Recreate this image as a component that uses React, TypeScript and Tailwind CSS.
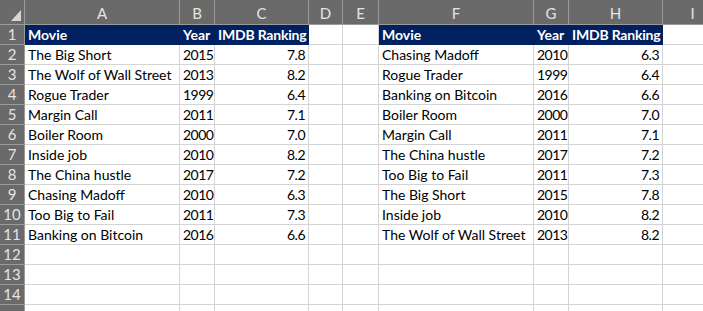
import React from "react";

const left: [string, string, string][] = [
  ["The Big Short", "2015", "7.8"],
  ["The Wolf of Wall Street", "2013", "8.2"],
  ["Rogue Trader", "1999", "6.4"],
  ["Margin Call", "2011", "7.1"],
  ["Boiler Room", "2000", "7.0"],
  ["Inside job", "2010", "8.2"],
  ["The China hustle", "2017", "7.2"],
  ["Chasing Madoff", "2010", "6.3"],
  ["Too Big to Fail", "2011", "7.3"],
  ["Banking on Bitcoin", "2016", "6.6"],
];

const right: [string, string, string][] = [
  ["Chasing Madoff", "2010", "6.3"],
  ["Rogue Trader", "1999", "6.4"],
  ["Banking on Bitcoin", "2016", "6.6"],
  ["Boiler Room", "2000", "7.0"],
  ["Margin Call", "2011", "7.1"],
  ["The China hustle", "2017", "7.2"],
  ["Too Big to Fail", "2011", "7.3"],
  ["The Big Short", "2015", "7.8"],
  ["Inside job", "2010", "8.2"],
  ["The Wolf of Wall Street", "2013", "8.2"],
];

const cols = ["A", "B", "C", "D", "E", "F", "G", "H", "I"];

const cell =
  "h-[20px] border-r border-b border-[#d4d4d4] px-[3px] leading-[19px] whitespace-nowrap overflow-hidden text-black text-[14px]";
const num = cell + " text-right tracking-[-0.5px]";
const head =
  "h-[20px] border-r border-b border-[#002060] bg-[#002060] px-[3px] leading-[19px] whitespace-nowrap overflow-hidden text-white font-bold text-[14px]";
const rowHdr =
  "h-[20px] border-r border-b border-[#9b9b9b] bg-[#6a6a6a] text-[#e4e4e4] text-center leading-[19px] text-[15px]";

export default function App() {
  const rows: React.ReactNode[] = [];
  for (let r = 1; r <= 15; r++) {
    const L = r >= 2 && r <= 11 ? left[r - 2] : null;
    const R = r >= 2 && r <= 11 ? right[r - 2] : null;
    rows.push(<div key={`h${r}`} className={rowHdr}>{r <= 14 ? r : ""}</div>);
    if (r === 1) {
      rows.push(<div key="a1" className={head}>Movie</div>);
      rows.push(<div key="b1" className={head}>Year</div>);
      rows.push(<div key="c1" className={head + " text-right tracking-[-0.2px]"}>IMDB Ranking</div>);
      rows.push(<div key="d1" className={cell}></div>);
      rows.push(<div key="e1" className={cell}></div>);
      rows.push(<div key="f1" className={head}>Movie</div>);
      rows.push(<div key="g1" className={head}>Year</div>);
      rows.push(<div key="h1" className={head + " text-right tracking-[-0.2px]"}>IMDB Ranking</div>);
      rows.push(<div key="i1" className={cell}></div>);
    } else {
      rows.push(<div key={`a${r}`} className={cell}>{L ? L[0] : ""}</div>);
      rows.push(<div key={`b${r}`} className={num}>{L ? L[1] : ""}</div>);
      rows.push(<div key={`c${r}`} className={num}>{L ? L[2] : ""}</div>);
      rows.push(<div key={`d${r}`} className={cell}></div>);
      rows.push(<div key={`e${r}`} className={cell}></div>);
      rows.push(<div key={`f${r}`} className={cell}>{R ? R[0] : ""}</div>);
      rows.push(<div key={`g${r}`} className={num}>{R ? R[1] : ""}</div>);
      rows.push(<div key={`h${r}`} className={num}>{R ? R[2] : ""}</div>);
      rows.push(<div key={`i${r}`} className={cell}></div>);
    }
  }

  return (
    <div
      className="w-[703px] h-[311px] overflow-hidden bg-white"
      style={{ fontFamily: "Lato, 'Open Sans', sans-serif" }}
    >
      <div className="grid grid-cols-[25px_155px_35px_94px_34px_36px_155px_35px_94px_60px] grid-rows-[25px_repeat(15,20px)]">
        <div className="h-[25px] relative bg-[#6a6a6a] border-r border-b border-[#9b9b9b]">
          <svg width="25" height="25" className="absolute left-0 top-0">
            <polygon points="11,21 21,21 21,10" fill="#d6d6d6" />
          </svg>
        </div>
        {cols.map((c) => (
          <div
            key={c}
            className="h-[25px] pt-[1px] bg-[#6a6a6a] border-r border-b border-[#9b9b9b] text-[#e4e4e4] text-center leading-[24px] text-[15px]"
          >
            {c}
          </div>
        ))}
        {rows}
      </div>
    </div>
  );
}
